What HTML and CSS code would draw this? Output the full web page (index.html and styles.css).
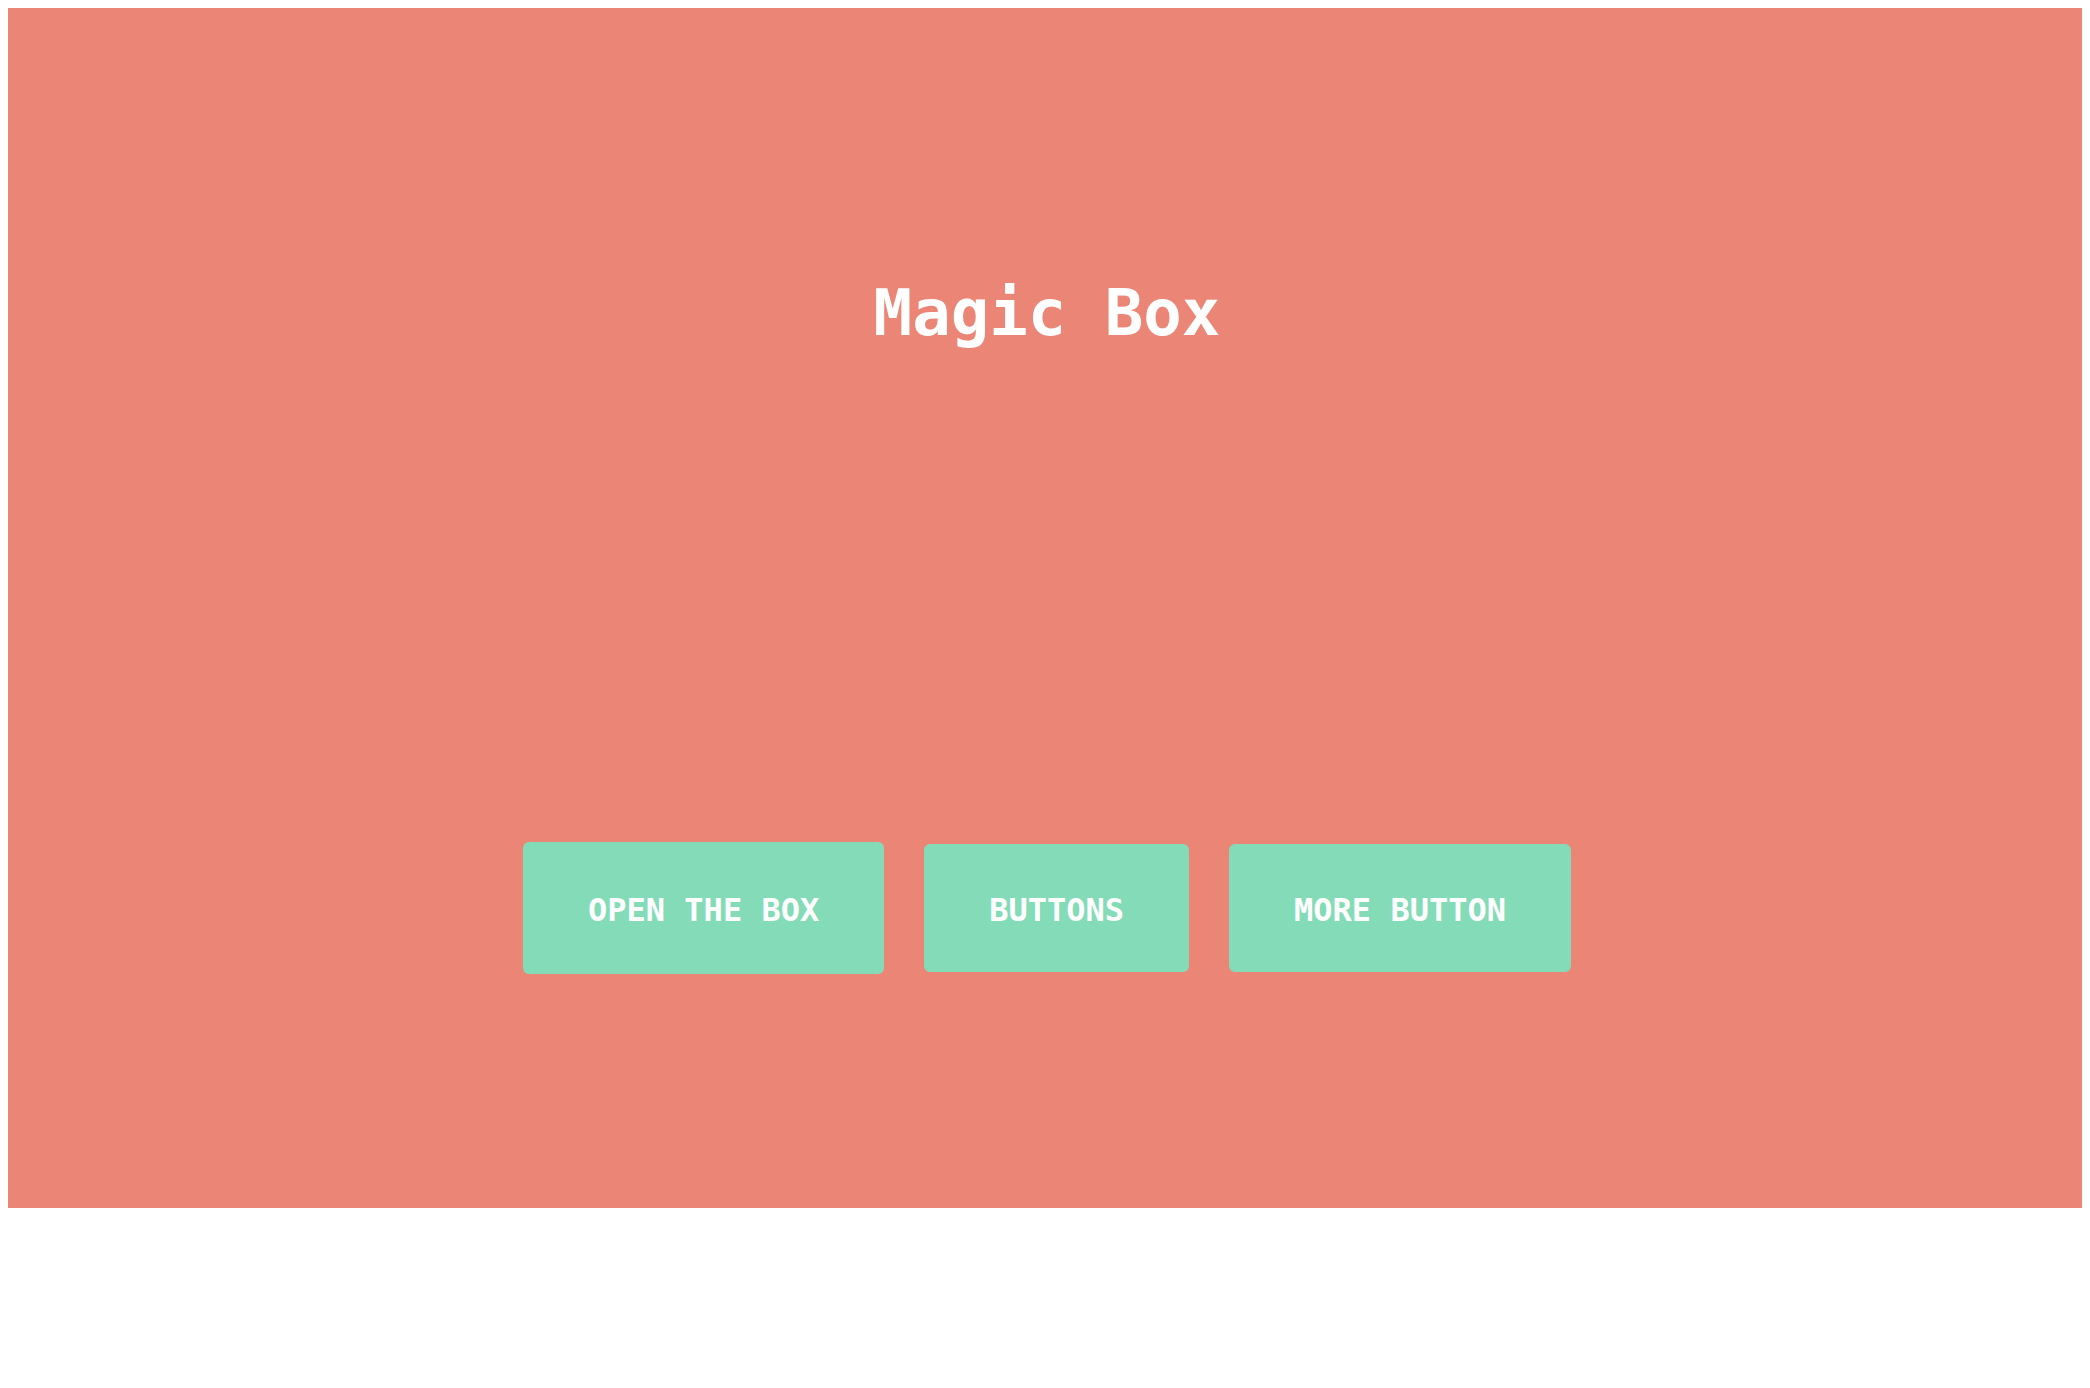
FILE: index.html
```html
<!DOCTYPE html>
<html>
<head>
<meta charset="utf-8">
<link rel="stylesheet" href="styles.css">
</head>
<body>
<div class="box">
  <h1 class="title">Magic Box</h1>
  <div class="actions">
    <button class="btn btn-open"><span class="label">OPEN THE BOX</span></button>
    <button class="btn"><span class="label">BUTTONS</span></button>
    <button class="btn"><span class="label">MORE BUTTON</span></button>
  </div>
</div>
</body>
</html>
```
FILE: styles.css
```css
html, body {
  background: #ffffff;
}
body {
  margin: 8px;
  font-family: "DejaVu Sans Mono", "Liberation Mono", monospace;
}
.box {
  width: 2078px;
  height: 1200px;
  background: #eb8677;
  box-sizing: border-box;
  padding-top: 273px;
  display: flex;
  flex-direction: column;
}
.title {
  margin: 0;
  font-size: 64px;
  line-height: 64px;
  font-weight: bold;
  color: #ffffff;
  text-align: center;
}
.actions {
  margin-top: 497px;
  display: flex;
  justify-content: center;
  align-items: center;
  gap: 40px;
}
.btn {
  border: none;
  border-radius: 6px;
  background: #83dcb7;
  color: #ffffff;
  font-family: "DejaVu Sans Mono", "Liberation Mono", monospace;
  font-weight: bold;
  font-size: 32px;
  line-height: 32px;
  height: 128px;
  padding: 0 65px;
  display: flex;
  align-items: center;
  justify-content: center;
  white-space: nowrap;
}
.btn-open {
  height: 132px;
  padding: 0 65px;
}
.label {
  display: inline-block;
  padding-top: 4px;
}
```
